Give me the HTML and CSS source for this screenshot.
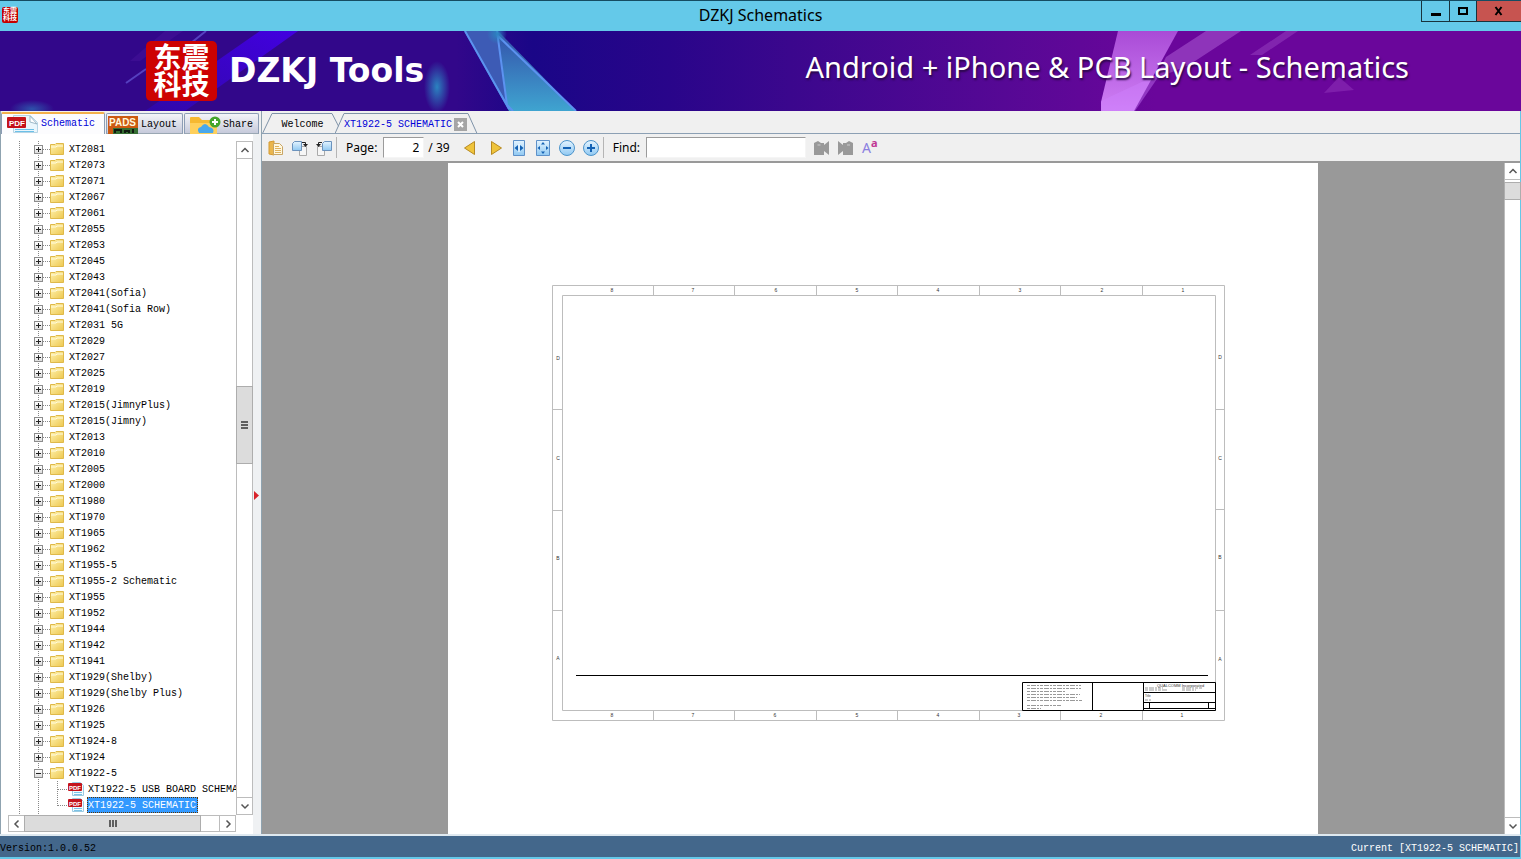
FILE: index.html
```html
<!DOCTYPE html>
<html lang="en">
<head>
  <meta charset="UTF-8">
  <meta name="viewport" content="width=device-width, initial-scale=1">
  <title>DZKJ Schematics</title>
  <link rel="stylesheet" href="styles.css">
</head>
<body>
  <!-- shared icons -->
  <svg class="defs" width="0" height="0" aria-hidden="true">
    <defs>
      <linearGradient id="gold" x1="0" y1="0" x2="1" y2="1">
        <stop offset="0" stop-color="#fff3b0"/><stop offset="1" stop-color="#edc74f"/>
      </linearGradient>
      <linearGradient id="blue" x1="0" y1="0" x2="0" y2="1">
        <stop offset="0" stop-color="#e4f4ff"/><stop offset="1" stop-color="#8fc8f2"/>
      </linearGradient>
      <symbol id="folder" viewBox="0 0 14 12">
        <path d="M.5 1.5h4.5l1-1h7.500v11H.5z" fill="url(#gold)" stroke="#dfb94a"/>
        <path d="M1 4h5l1-1h6" fill="none" stroke="#fffbe0"/>
      </symbol>
      <symbol id="pdf" viewBox="0 0 16 14">
        <path d="M4.500.5h8l3 3v10h-11z" fill="#f3fbff" stroke="#9ccbe2"/>
        <path d="M6 10.500h8M6 12.500h8" stroke="#7cc3e6"/>
        <rect y="1" width="14" height="8" rx="1" fill="#c4141c"/>
        <text x="1" y="8" font-size="6" font-weight="bold" font-family="Liberation Sans, sans-serif" fill="#fff">PDF</text>
      </symbol>
      <symbol id="up" viewBox="0 0 10 10"><path d="M1.500 7L5 3.500 8.500 7" fill="none" stroke="#555" stroke-width="1.500"/></symbol>
      <symbol id="down" viewBox="0 0 10 10"><path d="M1.500 3.500L5 7l3.500-3.500" fill="none" stroke="#555" stroke-width="1.500"/></symbol>
      <symbol id="left" viewBox="0 0 10 10"><path d="M6.500 1.500L3 5l3.500 3.500" fill="none" stroke="#555" stroke-width="1.500"/></symbol>
      <symbol id="right" viewBox="0 0 10 10"><path d="M3.500 1.500L7 5 3.500 8.500" fill="none" stroke="#555" stroke-width="1.500"/></symbol>
    </defs>
  </svg>

  <header class="titlebar">
    <span class="mini-logo"><b>东震</b><b>科技</b></span>
    <h1>DZKJ Schematics</h1>
    <div class="window-buttons">
      <button aria-label="Minimize"><svg width="12" height="12"><path d="M1 8h10v3H1z"/></svg></button>
      <button aria-label="Maximize"><svg width="12" height="12"><path d="M2 3h8v6H2z" fill="none" stroke="#000" stroke-width="2"/></svg></button>
      <button class="close" aria-label="Close"><svg width="12" height="12"><path d="M2.500 2l6 8M8.500 2l-6 8" fill="none" stroke="#000" stroke-width="2"/></svg></button>
    </div>
  </header>

  <div class="banner">
    <svg class="banner-art" viewBox="0 0 1521 80" preserveAspectRatio="none" aria-hidden="true">
      <defs>
        <linearGradient id="beam" x1="0" y1="1" x2="1" y2="0"><stop offset="0" stop-color="#3008a8"/><stop offset="1" stop-color="#4200e0"/></linearGradient>
        <linearGradient id="shard" x1="0" y1="0" x2="0" y2="1"><stop offset="0" stop-color="#3350aa"/><stop offset="1" stop-color="#3fa4d0"/></linearGradient>
        <linearGradient id="pink" x1="0" y1="0" x2="0" y2="1"><stop offset="0" stop-color="#a94bd6"/><stop offset="1" stop-color="#cf80f5"/></linearGradient>
        <radialGradient id="glow"><stop offset="0" stop-color="#2b83c0"/><stop offset="1" stop-color="#2b83c0" stop-opacity="0"/></radialGradient>
      </defs>
      <path d="M145 80L260 0h38L185 80z" fill="url(#beam)"/>
      <path d="M130 30L165 0h18L140 30z" fill="#45149a" opacity=".5"/>
      <path d="M186 16L206 0M126 52l20-14" stroke="#5640c0" stroke-width="2"/>
      <ellipse cx="437" cy="56" rx="13" ry="26" fill="url(#glow)"/>
      <ellipse cx="32" cy="78" rx="22" ry="9" fill="url(#glow)" opacity=".6"/>
      <path d="M464 0h34l78 80h-67z" fill="url(#shard)"/>
      <path d="M464 0h34l9 72z" fill="#3d5bb5"/>
      <path d="M465 0l44 78M497 0l10 74 6 6M497 4l79 76" fill="none" stroke="#5c92f0" stroke-width="2"/>
      <circle cx="497" cy="3" r="10" fill="url(#glow)"/>
      <path d="M1118 0h60l-44 80h-33v-9z" fill="url(#pink)"/>
      <path d="M1101 70l60-28-26 38h-33z" fill="#cf82ff" opacity=".4"/>
      <path d="M1166 26L1206 0h35l-52 34-34 14z" fill="#9e48c8" opacity=".7"/>
      <path d="M1250 24l36-24h12l-36 24z" fill="#8b32b6" opacity=".7"/>
      <path d="M1324 62l15-16 15 13z" fill="#882ab2" opacity=".7"/>
    </svg>
    <div class="logo"><span>东震</span><span>科技</span></div>
    <strong class="brand">DZKJ Tools</strong>
    <p class="slogan">Android + iPhone &amp; PCB Layout - Schematics</p>
  </div>

  <main>
    <aside>
      <nav class="side-tabs">
        <button class="active">
          <svg width="32" height="18" viewBox="0 0 32 18">
            <path d="M6.500.5h17l7 7v10h-24z" fill="#eaf6fc" stroke="#b7d5e4"/>
            <path d="M23 1l7 8-7-2z" fill="#fff" stroke="#9eb9c8"/>
            <path d="M8 14.500h19M8 16.500h19" stroke="#6cc0e8"/>
            <rect y="2" width="19" height="11" rx="1" fill="#c5121b"/>
            <text x="2" y="11" font-size="8" font-weight="bold" font-family="Liberation Sans, sans-serif" fill="#fff">PDF</text>
          </svg>
          Schematic
        </button>
        <button>
          <svg width="32" height="18" viewBox="0 0 32 18">
            <path d="M1 0h30v18H1z" fill="#cc5a12"/>
            <path d="M6 12h25v6H6z" fill="#356d32"/>
            <path d="M8 17v-3h6v3m4 0v-2h4v2m4 0v-4" fill="none" stroke="#101c10" stroke-width="2"/>
            <text x="2" y="10" font-size="10" font-weight="bold" font-family="Liberation Sans, sans-serif" fill="#fff7dd">PADS</text>
          </svg>
          Layout
        </button>
        <button class="share">
          <svg width="32" height="18" viewBox="0 0 32 18">
            <path d="M1 2q0-1 1-1h8l3 3h14v14H1z" fill="#f6b931"/>
            <path d="M1 7h27v11H1z" fill="#ffd05b"/>
            <path d="M10 17q-3-5 2-6 4-6 8 0 6 1 4 6z" fill="#4aa8ec"/>
            <circle cx="26" cy="6" r="5.500" fill="#45a62c"/>
            <path d="M26 3v6M23 6h6" stroke="#fff" stroke-width="2"/>
          </svg>
          Share
        </button>
      </nav>
      <div class="side-body">
        <div class="tree-box">
          <ul class="tree" id="tree"></ul>
          <div class="scroll-v">
            <button aria-label="Scroll up"><svg><use href="#up"/></svg></button>
            <div class="track"><div class="thumb"><i></i><i></i><i></i></div></div>
            <button aria-label="Scroll down"><svg><use href="#down"/></svg></button>
          </div>
          <div class="scroll-h">
            <button aria-label="Scroll left"><svg><use href="#left"/></svg></button>
            <div class="track"><div class="thumb"><i></i><i></i><i></i></div></div>
            <button aria-label="Scroll right"><svg><use href="#right"/></svg></button>
          </div>
        </div>
        <div class="splitter"><svg width="5" height="9"><path d="M0 0l5 4.500L0 9z" fill="#d8232a"/></svg></div>
      </div>
    </aside>

    <section class="document">
      <nav class="doc-tabs">
        <button class="tab-welcome">
          <svg width="78" height="23" aria-hidden="true"><path d="M.5 22.500L10 2.500h60L78 18M0 22.500h74" /></svg>
          Welcome
        </button>
        <div class="tab-open">
          <svg width="144" height="23" aria-hidden="true"><path class="fill" d="M0 23L9 3h124l9 20z"/><path d="M0 22.500L9 2.500h124l9 20"/></svg>
          <button>XT1922-5 SCHEMATIC</button>
          <button class="tab-close" aria-label="Close tab"><svg width="13" height="13"><path d="M4 4l5 5M9 4l-5 5" stroke="#fff" stroke-width="2"/></svg></button>
        </div>
      </nav>

      <div class="toolbar">
        <button aria-label="Open">
          <svg width="16" height="16"><path d="M1 2l5-1v14l-5-1z" fill="#eab64d" stroke="#d59b32"/><path d="M5.500 3.500h6l3 3v8h-9z" fill="#fff8e0" stroke="#c8a565"/><path d="M7 6.500h4M7 8.500h6M7 10.500h6M7 12.500h6" stroke="#e0b25c"/></svg>
        </button>
        <button aria-label="Rotate right">
          <svg width="16" height="16"><path d="M7.500 6.500h7v9h-7z" fill="#f6f6f6" stroke="#aaa"/><path d="M.5 3.500l2-2h7v9h-9z" fill="url(#blue)" stroke="#6c93bd"/><path d="M10 2.500h3.500V5" fill="none" stroke="#222"/><path d="M11 4h5l-2.500 3z" fill="#222"/></svg>
        </button>
        <button aria-label="Rotate left">
          <svg width="16" height="16"><path d="M1.500 6.500h7v9h-7z" fill="#f6f6f6" stroke="#aaa"/><path d="M6.500 3.500l2-2h7v9h-9z" fill="url(#blue)" stroke="#6c93bd"/><path d="M6 2.500H2.500V5" fill="none" stroke="#222"/><path d="M0 4h5L2.500 7z" fill="#222"/></svg>
        </button>
        <span class="divider"></span>
        <label for="page">Page:</label>
        <input type="text" id="page" value="2">
        <span class="total">/ 39</span>
        <div class="steps">
          <button aria-label="Previous page"><svg width="14" height="16"><path d="M11.500 1.500v13L1.500 8z" fill="#efc43c" stroke="#b78a22"/></svg></button>
          <button aria-label="Next page"><svg width="14" height="16"><path d="M2.500 1.500v13l10-6.500z" fill="#efc43c" stroke="#b78a22"/></svg></button>
        </div>
        <div class="zooms">
          <button aria-label="Fit width"><svg width="16" height="16"><path d="M2.500.5h11v15h-11z" fill="url(#blue)" stroke="#5e91c9"/><path d="M8 4v8" stroke="#fff"/><path d="M7 5v6L3.500 8zM9 5v6l3.500-3z" fill="#1462b4"/></svg></button>
          <button aria-label="Fit page"><svg width="16" height="16"><path d="M1.500.5h13v15h-13z" fill="url(#blue)" stroke="#5e91c9"/><path d="M6 4.500h4L8 2zM6 11.500h4L8 14zM5 6v4L2.500 8zM11 6v4l2.500-2z" fill="#1462b4"/></svg></button>
          <button aria-label="Zoom out"><svg width="16" height="16"><circle cx="8" cy="8" r="7.500" fill="url(#blue)" stroke="#4d94ca"/><path d="M4 8h8" stroke="#1462b4" stroke-width="2"/></svg></button>
          <button aria-label="Zoom in"><svg width="16" height="16"><circle cx="8" cy="8" r="7.500" fill="url(#blue)" stroke="#4d94ca"/><path d="M4 8h8M8 4v8" stroke="#1462b4" stroke-width="2"/></svg></button>
        </div>
        <span class="divider"></span>
        <label for="find">Find:</label>
        <input type="text" id="find">
        <button aria-label="Find previous"><svg width="16" height="14"><path d="M0 2l4-2 3 2h3v2l5-4v14l-5-4v4H0z" fill="#999"/><path d="M3.500 4h3" stroke="#ccc"/></svg></button>
        <button aria-label="Find next"><svg width="16" height="14"><path d="M15 2l-4-2-3 2H5v2L0 0v14l5-4v4h10z" fill="#999"/><path d="M9 4h3" stroke="#ccc"/></svg></button>
        <button class="match-case" aria-label="Match case">A<sup>a</sup></button>
      </div>

      <div class="viewer">
        <div class="canvas">
          <div class="page">
            <svg viewBox="0 0 870 672" id="sheet" role="img" aria-label="Schematic sheet">
              <g class="frame">
                <path d="M104.500 122.500h672v435h-672zM114.500 132.500h653v415h-653z"/>
                <path d="M205.500 123v9M286.500 123v9M368.500 123v9M449.500 123v9M531.500 123v9M612.500 123v9M694.500 123v9"/>
                <path d="M205.500 548v9M286.500 548v9M368.500 548v9M449.500 548v9M531.500 548v9M612.500 548v9M694.500 548v9"/>
                <path d="M105 246.500h9M105 347.500h9M105 447.500h9M768 246.500h9M768 346.500h9M768 447.500h9"/>
              </g>
              <g class="marks">
                <text x="164" y="129">8</text><text x="245" y="129">7</text><text x="328" y="129">6</text><text x="409" y="129">5</text>
                <text x="490" y="129">4</text><text x="572" y="129">3</text><text x="654" y="129">2</text><text x="735" y="129">1</text>
                <text x="164" y="554">8</text><text x="245" y="554">7</text><text x="327" y="554">6</text><text x="409" y="554">5</text>
                <text x="490" y="554">4</text><text x="571" y="554">3</text><text x="653" y="554">2</text><text x="734" y="554">1</text>
                <text x="110" y="197">D</text><text x="110" y="297">C</text><text x="110" y="397">B</text><text x="110" y="497">A</text>
                <text x="772" y="196">D</text><text x="772" y="297">C</text><text x="772" y="396">B</text><text x="772" y="498">A</text>
              </g>
              <!-- title block -->
              <g class="block">
                <path d="M128 512.500h632M574.500 519.500h193v28h-193zM644.500 519v28M695.500 519v28M695 529.500h72M695 539.500h72M695 545.500h72M701.500 540v6M760.500 540v6"/>
              </g>
              <g class="fine">
                <path d="M579 522.500h54M579 525.500h54M579 528.500h38M579 531.500h53M579 534.500h50M579 537.500h56M579 542.500h34M579 545.500h14M697 525h18M697 527h22M734 525h20M734 527h14M697 537h6"/>
                <text x="709" y="524">QUALCOMM Incorporated</text>
                <text x="697" y="534">Title</text>
              </g>
            </svg>
          </div>
        </div>
        <div class="scroll-v">
          <button aria-label="Scroll up"><svg><use href="#up"/></svg></button>
          <div class="track"><div class="thumb"></div></div>
          <button aria-label="Scroll down"><svg><use href="#down"/></svg></button>
        </div>
      </div>
    </section>
  </main>

  <footer>
    <span class="version">Version:1.0.0.52</span>
    <span>Current [XT1922-5 SCHEMATIC]</span>
  </footer>

  <script src="script.js"></script>
</body>
</html>
```

FILE: styles.css
```css
* { box-sizing: border-box; }
body { margin: 0; height: 100vh; display: flex; flex-direction: column; overflow: hidden; background: #f0f0f0; color: #000; font: 10px/16px "Liberation Mono", monospace; border-bottom: 2px solid #64c8e8; }
button { margin: 0; padding: 0; border: 0; background: none; font: inherit; color: inherit; cursor: pointer; }
svg { display: block; }
.defs { position: absolute; }

/* title bar */
.titlebar { flex: none; display: grid; grid-template-columns: 1fr auto 1fr; height: 31px; background: #64c9e9; border-top: 1px solid #154c62; }
.titlebar h1 { margin: 0; font: 16px/29px "Noto Sans", sans-serif; }
.mini-logo { width: 16px; height: 16px; margin: 6px 2px; background: #c40000; border-radius: 2px; color: #fff; text-align: center; font: 7px/7px "Noto Sans CJK SC", sans-serif; }
.mini-logo b { display: block; }
.window-buttons { display: flex; justify-self: end; height: 21px; border: 1px solid #18323c; border-width: 0 0 1px 1px; }
.window-buttons button { width: 27px; display: flex; align-items: center; justify-content: center; }
.window-buttons button + button { width: 27px; border-left: 1px solid #18323c; }
.window-buttons .close { width: 45px; background: #c75450; }

/* banner */
.banner { flex: none; position: relative; display: flex; align-items: center; height: 80px; padding: 0 112px 0 146px; overflow: hidden; color: #fff; background: linear-gradient(90deg, #32078a 0%, #32078a 30%, #1a0687 35%, #29058a 44%, #3b078d 52%, #560895 66%, #6a069b 76%, #6a069b 100%); }
.banner-art { position: absolute; left: 0; top: 0; width: 100%; height: 100%; }
.logo { position: relative; width: 71px; height: 60px; padding: 2px 0; background: #cd0202; border-radius: 5px; text-align: center; font: bold 28px/27px "Noto Sans CJK SC", sans-serif; }
.logo span { display: block; }
.brand { position: relative; margin-left: 12px; font: bold 33px/40px "DejaVu Sans", sans-serif; }
.slogan { position: relative; margin: 0 0 8px auto; font: 29px/40px "Noto Sans", sans-serif; text-shadow: 1px 2px 2px #2a0848; }

/* sidebar */
main { flex: 1; display: flex; min-height: 0; border-right: 1px solid #64c8e8; border-bottom: 2px solid #dfe9f0; }
aside { flex: none; display: flex; flex-direction: column; width: 261px; border-left: 1px solid #8fa3b0; }
.side-tabs { flex: none; display: flex; gap: 1px; height: 23px; padding-top: 1px; }
.side-tabs button { display: flex; align-items: center; gap: 2px; width: 77px; margin-top: 1px; padding: 2px 0 0; border: 1px solid #8c9db5; border-bottom-color: #9aa7b3; border-radius: 2px 2px 0 0; background: linear-gradient(#f3f4f8, #c6cadb); }
.side-tabs .active { width: 104px; margin-top: 0; padding: 0 5px; background: #fcfcfe; border-top: 2px solid #f3b04a; border-bottom: 0; color: #0000d8; }
.side-tabs .share { width: 75px; padding-left: 4px; }
.side-body { flex: 1; display: flex; min-height: 0; background: #fff; }
.tree-box { flex: 1; display: grid; grid-template: minmax(0, 1fr) 17px / minmax(0, 1fr) 17px; padding: 7px 0 2px 7px; }
.tree { margin: 0; padding: 0; list-style: none; overflow: hidden; white-space: nowrap; }
.tree li { display: flex; align-items: center; height: 16px; padding-left: 26px;
  background:
    repeating-linear-gradient(#888 0 1px, transparent 1px 2px) 11px 0 / 1px 100% no-repeat,
    repeating-linear-gradient(#888 0 1px, transparent 1px 2px) 30px 0 / 1px 100% no-repeat,
    repeating-linear-gradient(90deg, #888 0 1px, transparent 1px 2px) 35px 8px / 7px 1px no-repeat; }
.tree .file { padding-left: 60px;
  background:
    repeating-linear-gradient(#888 0 1px, transparent 1px 2px) 11px 0 / 1px 100% no-repeat,
    repeating-linear-gradient(#888 0 1px, transparent 1px 2px) 30px 0 / 1px 100% no-repeat,
    repeating-linear-gradient(#888 0 1px, transparent 1px 2px) 49px 0 / 1px 100% no-repeat,
    repeating-linear-gradient(90deg, #888 0 1px, transparent 1px 2px) 50px 8px / 10px 1px no-repeat; }
.tree .file:nth-last-child(2) { background-size: 1px 100%, 1px 100%, 1px 9px, 10px 1px; }
.expander { flex: none; width: 9px; height: 9px; margin-right: 7px; border: 1px solid #8c8c8c; background: linear-gradient(#fff, #ddd); }
.expander svg { width: 7px; height: 7px; }
.folder-icon { flex: none; width: 14px; height: 12px; margin-right: 3px; }
.pdf-icon { flex: none; width: 16px; height: 14px; margin-right: 3px; }
.name { padding: 2px 1px 0; border: 1px solid transparent; line-height: 12px; }
.tree .file .name { padding-left: 0; }
.selected .name { background: #3399ff; color: #fff; border: 1px dotted #5c3500; }
.splitter { width: 8px; display: flex; align-items: center; padding: 22px 0 0 1px; background: #eff1f3; }

/* scroll bars */
.scroll-v, .scroll-h { display: flex; background: #fff; border: 1px solid #bcbcbc; }
.scroll-v { flex-direction: column; width: 17px; }
.scroll-v button, .scroll-h button { flex: none; width: 15px; height: 16px; display: flex; align-items: center; justify-content: center; }
.scroll-v button svg, .scroll-h button svg { width: 10px; height: 10px; }
.scroll-v .track { flex: 1; display: flex; flex-direction: column; border: 1px solid #bcbcbc; border-width: 1px 0; }
.scroll-h .track { flex: 1; display: flex; border: 1px solid #bcbcbc; border-width: 0 1px; }
.thumb { display: flex; align-items: center; justify-content: center; gap: 1px; background: #dcdcdc; outline: 1px solid #adadad; }
.scroll-v .thumb { flex-direction: column; height: 76px; margin-top: 228px; }
.scroll-h .thumb { width: 175px; }
.scroll-v .thumb i { width: 7px; height: 2px; background: #606060; }
.scroll-h .thumb i { width: 2px; height: 7px; background: #606060; }
.scroll-h { height: 17px; }

/* document */
.document { flex: 1; display: flex; flex-direction: column; min-width: 0; border-left: 1px solid #8fa3b0; }
.doc-tabs { flex: none; display: flex; height: 23px; border-bottom: 1px solid #8ca0b4; }
.doc-tabs svg { fill: none; stroke: #7f93a8; }
.doc-tabs .fill { fill: #f0f0f0; stroke: none; }
.tab-welcome, .tab-open { position: relative; height: 23px; padding-top: 4px; }
.tab-welcome { width: 73px; padding-left: 8px; }
.tab-open { display: flex; align-items: center; width: 142px; padding-left: 9px; gap: 2px; color: #0000d8; }
.tab-welcome > svg, .tab-open > svg { position: absolute; left: 0; top: 0; z-index: -1; }
.tab-close { width: 13px; height: 13px; background: #a5a5a5; }

/* toolbar */
.toolbar { flex: none; display: flex; align-items: center; gap: 8px; height: 29px; padding: 0 6px; border-bottom: 2px solid #999; font: 12px/20px "Noto Sans", sans-serif; }
.toolbar input { height: 21px; padding: 0 4px; border: 1px solid; border-color: #9b9b9b #f5f5f5 #f5f5f5 #9b9b9b; background: #fff; font: inherit; outline: 0; }
#page { width: 41px; margin-left: -2px; text-align: right; }
#find { width: 160px; margin-left: -2px; }
.divider { width: 1px; height: 21px; margin: 0 1px 0 -4px; background: #b5b5b5; }
.total { margin-left: -4px; }
.steps, .zooms { display: flex; gap: 12px; margin-left: 5px; }
.zooms { gap: 8px; margin-left: 0; }
.match-case { color: #8a7fe0; font-size: 14px; line-height: 16px; }
.match-case sup { color: #c13794; font-size: 11px; font-weight: bold; line-height: 0; }

/* viewer */
.viewer { flex: 1; display: flex; min-height: 0; background: #999; }
.canvas { flex: 1; display: flex; justify-content: center; overflow: hidden; }
.page { width: 870px; max-width: 100%; background: #fff; }
.viewer .scroll-v { width: 16px; border-width: 0 0 0 1px; }
.viewer .scroll-v button { width: 15px; }
.viewer .thumb { height: 16px; margin-top: 3px; }
#sheet { width: 100%; }
.frame { fill: none; stroke: #bdbdbd; }
.marks { font: 5px "Liberation Sans", sans-serif; text-anchor: middle; fill: #333; }
.block { fill: none; stroke: #000; }
.fine { font: 3px "Liberation Sans", sans-serif; fill: #333; }
.fine path { stroke: #999; stroke-dasharray: 3 1 5 1 2 1; }
.fine text:first-of-type { font-size: 4px; }

/* status bar */
footer { flex: none; display: flex; justify-content: space-between; height: 21px; padding: 5px 1px 0 0; background: #43678b; color: #fff; border-right: 1px solid #64c8e8; }
.version { color: #000; }
```

FILE: script.js
```js
const folders = [
  'XT2081', 'XT2073', 'XT2071', 'XT2067', 'XT2061', 'XT2055', 'XT2053', 'XT2045', 'XT2043',
  'XT2041(Sofia)', 'XT2041(Sofia Row)', 'XT2031 5G', 'XT2029', 'XT2027', 'XT2025', 'XT2019',
  'XT2015(JimnyPlus)', 'XT2015(Jimny)', 'XT2013', 'XT2010', 'XT2005', 'XT2000', 'XT1980',
  'XT1970', 'XT1965', 'XT1962', 'XT1955-5', 'XT1955-2 Schematic', 'XT1955', 'XT1952', 'XT1944',
  'XT1942', 'XT1941', 'XT1929(Shelby)', 'XT1929(Shelby Plus)', 'XT1926', 'XT1925', 'XT1924-8',
  'XT1924', 'XT1922-5'
];
const openFolder = 'XT1922-5';
const files = ['XT1922-5 USB BOARD SCHEMATIC', 'XT1922-5 SCHEMATIC'];

function folderRow(name) {
  const open = name === openFolder;
  const sign = open ? 'M1 3.5h5' : 'M1 3.5h5M3.5 1v5';
  return `<li>
    <button class="expander" aria-label="${open ? 'Collapse' : 'Expand'}"><svg><path d="${sign}" stroke="#222"/></svg></button>
    <svg class="folder-icon"><use href="#folder"/></svg>
    <span class="name">${name}</span>
  </li>`;
}

function fileRow(name, i) {
  return `<li class="file${i === 1 ? ' selected' : ''}">
    <svg class="pdf-icon"><use href="#pdf"/></svg>
    <span class="name">${name}</span>
  </li>`;
}

document.getElementById('tree').innerHTML =
  folders.map(folderRow).join('') + files.map(fileRow).join('') + folderRow('');
```
